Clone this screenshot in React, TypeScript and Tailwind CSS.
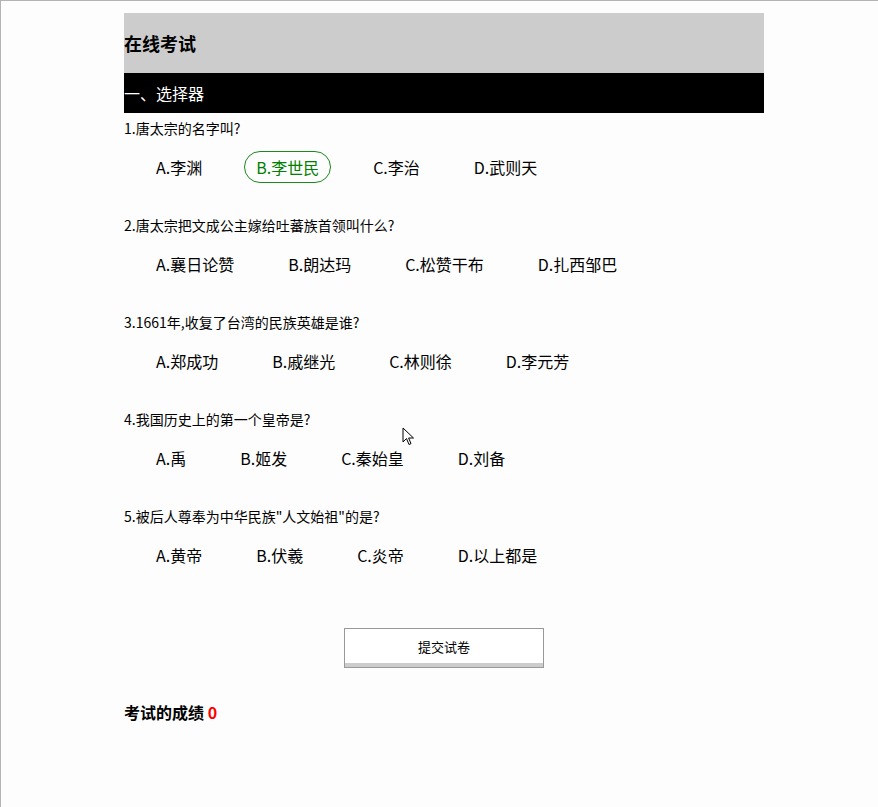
import React, { useState } from 'react';

type Question = {
  title: string;
  options: string[];
};

const questions: Question[] = [
  { title: '1.唐太宗的名字叫?', options: ['A.李渊', 'B.李世民', 'C.李治', 'D.武则天'] },
  { title: '2.唐太宗把文成公主嫁给吐蕃族首领叫什么?', options: ['A.襄日论赞', 'B.朗达玛', 'C.松赞干布', 'D.扎西邹巴'] },
  { title: '3.1661年,收复了台湾的民族英雄是谁?', options: ['A.郑成功', 'B.戚继光', 'C.林则徐', 'D.李元芳'] },
  { title: '4.我国历史上的第一个皇帝是?', options: ['A.禹', 'B.姬发', 'C.秦始皇', 'D.刘备'] },
  { title: '5.被后人尊奉为中华民族"人文始祖"的是?', options: ['A.黄帝', 'B.伏羲', 'C.炎帝', 'D.以上都是'] },
];

const App: React.FC = () => {
  const [answers, setAnswers] = useState<Record<number, number>>({ 0: 1 });
  const [score, setScore] = useState(0);

  const pick = (q: number, o: number) => {
    setAnswers({ ...answers, [q]: o });
  };

  const submit = () => {
    const right = [1, 2, 0, 2, 3];
    let s = 0;
    right.forEach((r, i) => {
      if (answers[i] === r) s += 20;
    });
    setScore(s);
  };

  return (
    <div
      className="relative min-h-screen bg-[#fdfdfd] border-t border-l border-[#b3b3b3] text-black"
      style={{ fontFamily: '"Noto Sans CJK SC", "Noto Sans", sans-serif' }}
    >
      <div className="ml-[123px] pt-[12px] w-[640px] flex flex-col">
        {/* Header */}
        <div className="h-[60px] bg-[#cccccc] flex items-center text-[18px] font-bold">
          在线考试
        </div>
        <div className="h-[40px] bg-black flex items-center text-white text-[16px]">
          一、选择器
        </div>

        {/* Questions */}
        <div className="pt-[5px] flex flex-col gap-[32px]">
          {questions.map((q, qi) => (
            <div key={qi}>
              <div className="h-[20px] leading-[20px] text-[14px]">{q.title}</div>
              <div className="mt-[13px] h-[32px] flex items-center pl-[20px] gap-[30px]">
                {q.options.map((opt, oi) => {
                  const active = answers[qi] === oi;
                  return (
                    <span
                      key={oi}
                      onClick={() => pick(qi, oi)}
                      className={
                        active
                          ? 'h-[32px] leading-[30px] px-[11px] rounded-full border border-[#1a8a1a] text-[#008000] text-[16px] cursor-pointer'
                          : 'h-[32px] leading-[30px] px-[11px] rounded-full border border-transparent text-[16px] cursor-pointer'
                      }
                    >
                      {opt}
                    </span>
                  );
                })}
              </div>
            </div>
          ))}
        </div>

        {/* Submit */}
        <div className="flex justify-center mt-[57px]">
          <button
            onClick={submit}
            className="w-[200px] h-[40px] bg-white border border-[#999999] shadow-[inset_0_-4px_0_#cccccc] text-[13px] pb-[2px]"
          >
            提交试卷
          </button>
        </div>

        <div className="mt-[33px] text-[16px] font-bold leading-[22px]">
          考试的成绩 <span className="text-[#ff0000]">{score}</span>
        </div>
      </div>

      {/* mouse pointer */}
      <svg
        className="absolute left-[401px] top-[426px]"
        width="14"
        height="20"
        viewBox="0 0 14 20"
      >
        <path
          d="M1 1 L1 15 L4.5 11.5 L7 17.5 L9 16.6 L6.6 11 L11.5 11 Z"
          fill="#ffffff"
          stroke="#000000"
          strokeWidth="1"
          strokeLinejoin="round"
        />
      </svg>
    </div>
  );
};

export default App;
